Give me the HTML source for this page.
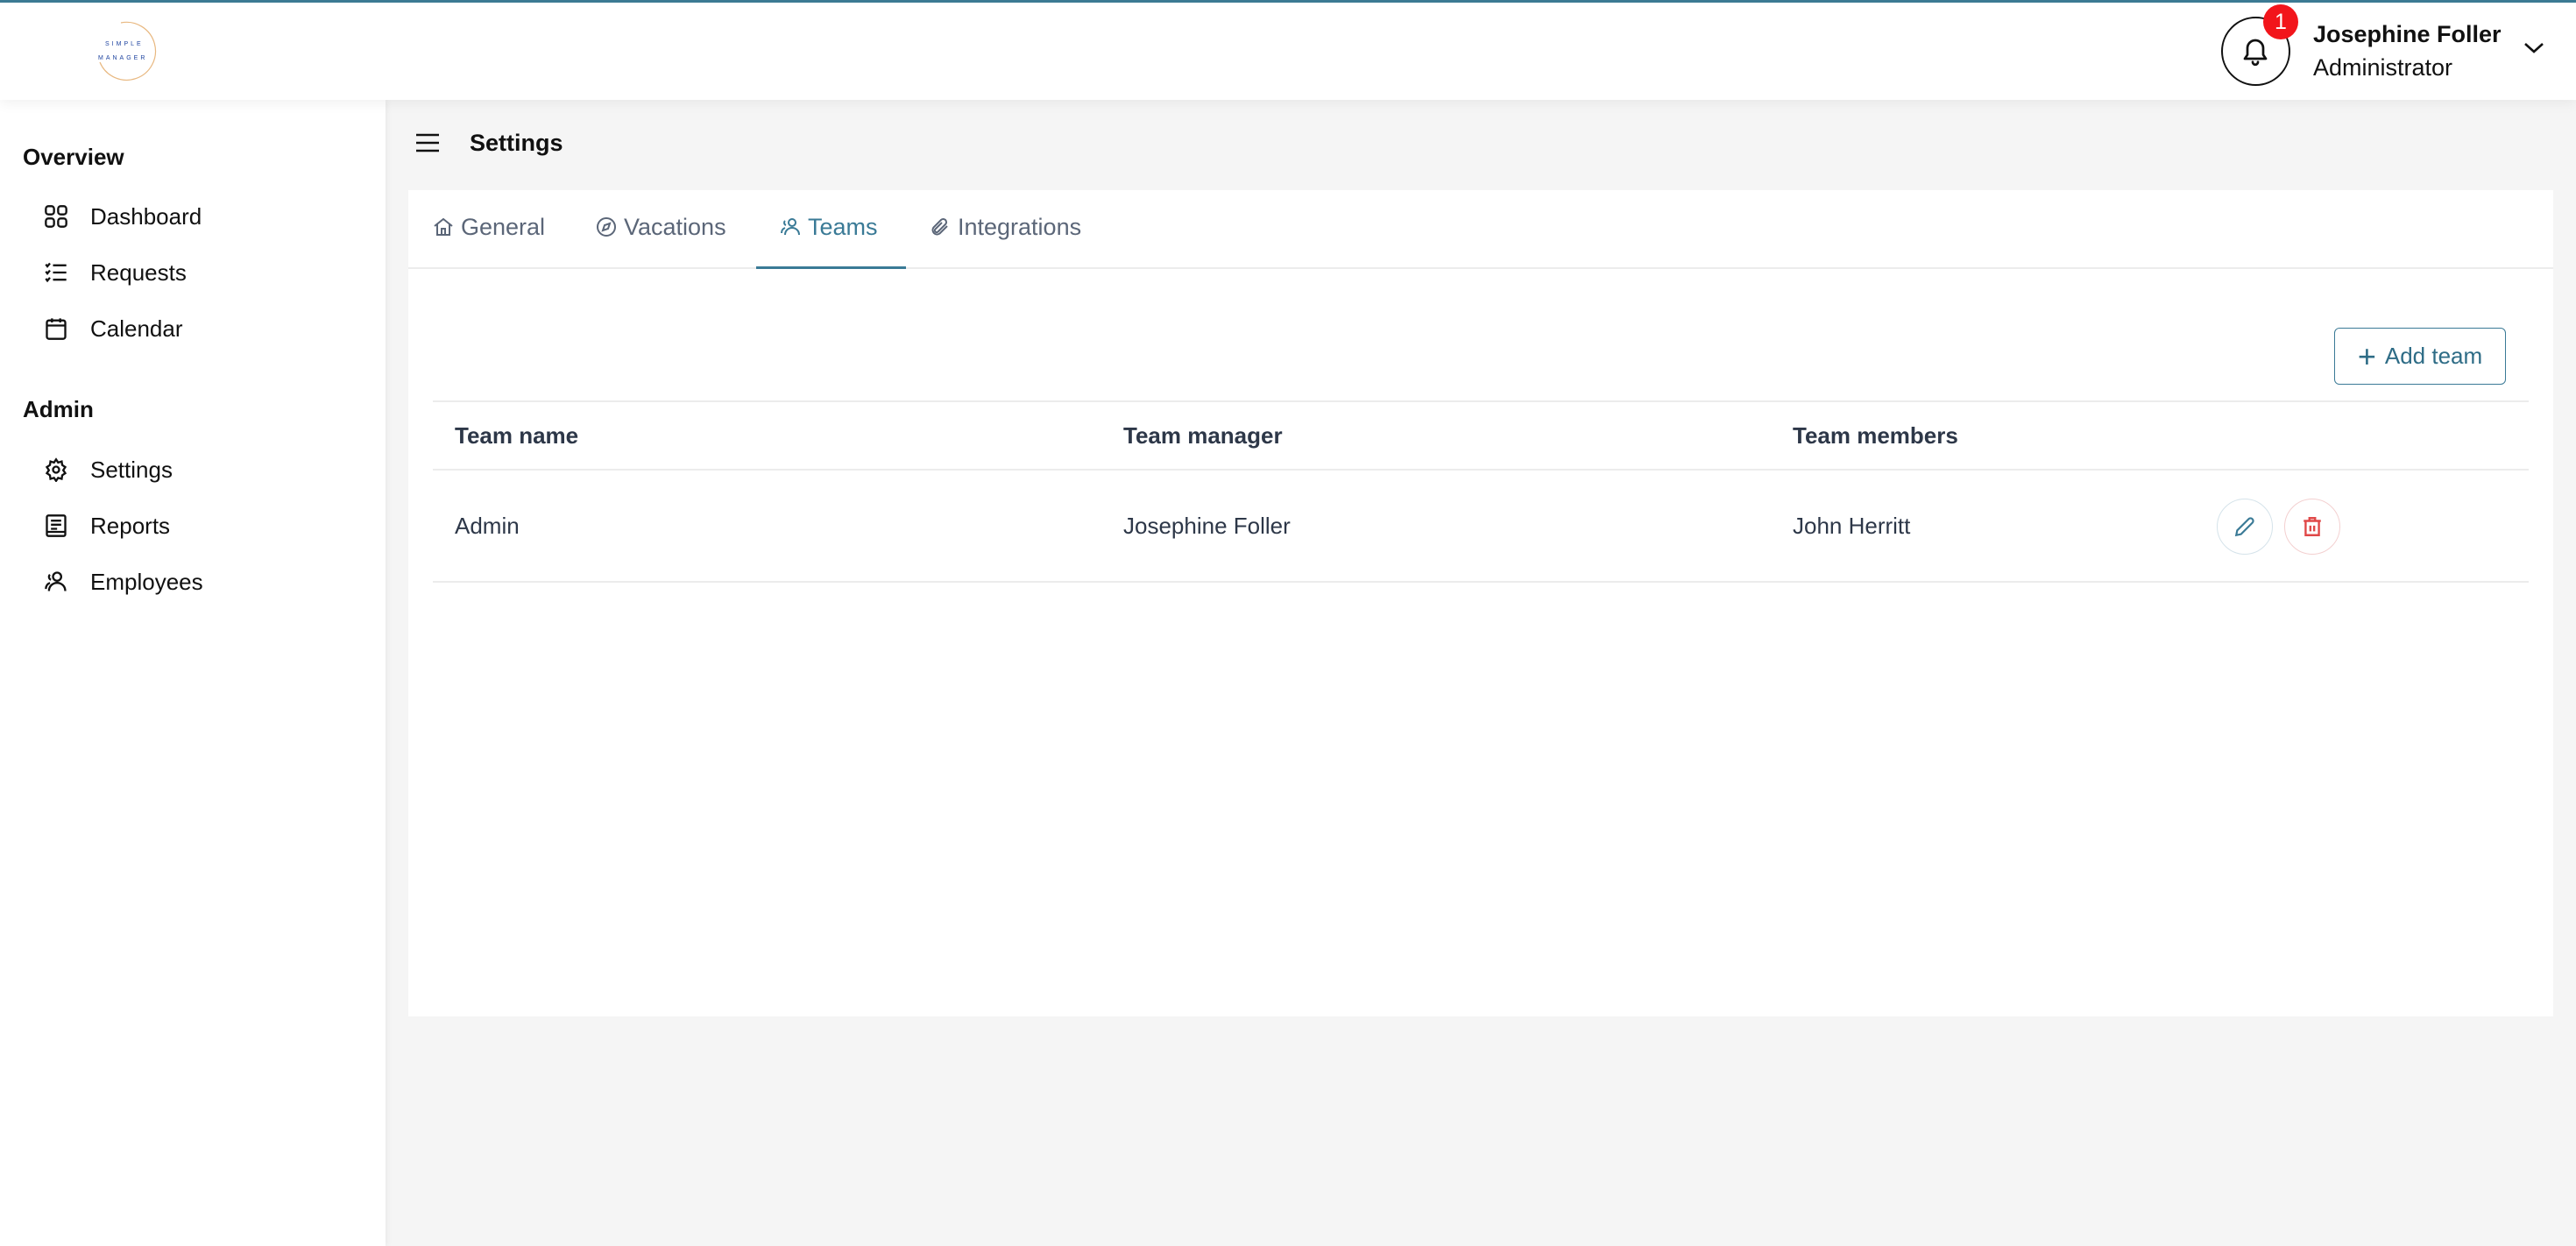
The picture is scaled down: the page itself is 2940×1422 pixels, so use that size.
<!DOCTYPE html>
<html><head><meta charset="utf-8"><style>
*{box-sizing:border-box;margin:0;padding:0}
body{width:2940px;height:1422px;position:relative;overflow:hidden;background:#f5f5f5;font-family:"Liberation Sans",sans-serif;color:#111}
.abs{position:absolute}
.hdr{left:0;top:0;width:2940px;height:114px;background:#fff;border-top:3px solid #3c7a93;box-shadow:0 4px 14px rgba(0,0,0,.06);z-index:2}
.side{left:0;top:114px;width:440px;height:1308px;background:#fff;box-shadow:2px 0 6px rgba(0,0,0,.05)}
.sec{left:26px;font-weight:bold;font-size:26px}
.item{left:50px;font-size:26px;display:flex;align-items:center;height:40px}
.item svg{width:28px;height:28px;margin-right:25px}
.card{left:466px;top:217px;width:2448px;height:943px;background:#fff}
.tab{top:226px;height:66px;display:flex;align-items:center;font-size:27px;color:#5b6678}
.tab svg{width:24px;height:24px;margin-right:8px}
.th{top:482px;font-size:26px;font-weight:bold;color:#2d3748}
.td{top:585px;font-size:26px;color:#2d3748}
.line{height:2px;background:#ececec;left:494px;width:2392px}
</style></head><body>
<div class="abs hdr">
 <svg class="abs" style="left:108px;top:18px" width="76" height="76" viewBox="0 0 76 76"><path d="M30 5 A33 33 0 1 1 6 50" fill="none" stroke="#e8b880" stroke-width="1.2"/></svg>
 <div class="abs" style="left:120px;top:44px;font-size:7px;letter-spacing:3px;color:#1f44a0">SIMPLE</div>
 <div class="abs" style="left:112px;top:60px;font-size:7px;letter-spacing:3px;color:#1f44a0">MANAGER</div>
 <div class="abs" style="left:2535px;top:16px;width:79px;height:79px;border:2px solid #111;border-radius:50%"></div>
 <svg class="abs" style="left:2556px;top:37px" width="36" height="36" viewBox="0 0 24 24" fill="none" stroke="#111" stroke-width="1.8" stroke-linecap="round" stroke-linejoin="round"><path d="M6 10a6 6 0 0 1 12 0v5l2 3H4l2-3z"/><path d="M10 20.5a2 2 0 0 0 4 0"/></svg>
 <div class="abs" style="left:2583px;top:2px;width:40px;height:40px;border-radius:50%;background:#f2151b;color:#fff;font-size:25px;text-align:center;line-height:40px">1</div>
 <div class="abs" style="left:2640px;top:21px;font-size:27px;font-weight:bold">Josephine Foller</div>
 <div class="abs" style="left:2640px;top:59px;font-size:27px">Administrator</div>
 <svg class="abs" style="left:2880px;top:44px" width="24" height="16" viewBox="0 0 24 16"><path d="M2 3l10 9 10-9" fill="none" stroke="#111" stroke-width="2.6"/></svg>
</div>
<div class="abs side"></div>
<div class="abs sec" style="top:164px">Overview</div>
<div class="abs item" style="top:227px"><svg viewBox="0 0 24 24" fill="none" stroke="#111" stroke-width="2"><rect x="2" y="2" width="8" height="8" rx="2.5"/><rect x="14" y="2" width="8" height="8" rx="2.5"/><rect x="2" y="14" width="8" height="8" rx="2.5"/><rect x="14" y="14" width="8" height="8" rx="2.5"/></svg>Dashboard</div>
<div class="abs item" style="top:291px"><svg viewBox="0 0 24 24" fill="none" stroke="#111" stroke-width="2"><path d="M9 5h13M9 12h13M9 19h13M2 4l1.5 2L6 3M2 11l1.5 2L6 10M2 18l1.5 2L6 17"/></svg>Requests</div>
<div class="abs item" style="top:355px"><svg viewBox="0 0 24 24" fill="none" stroke="#111" stroke-width="2"><rect x="3" y="4" width="18" height="18" rx="2"/><path d="M3 9h18M8 2v4M16 2v4"/></svg>Calendar</div>
<div class="abs sec" style="top:452px">Admin</div>
<div class="abs item" style="top:516px"><svg viewBox="0 0 24 24" fill="none" stroke="#111" stroke-width="2"><circle cx="12" cy="12" r="3"/><path d="M12 2l2 3 3.5-1 .5 3.5 3 2-2 3 2 3-3 2-.5 3.5-3.5-1-2 3-2-3-3.5 1-.5-3.5-3-2 2-3-2-3 3-2 .5-3.5 3.5 1z"/></svg>Settings</div>
<div class="abs item" style="top:580px"><svg viewBox="0 0 24 24" fill="none" stroke="#111" stroke-width="2"><rect x="3" y="2" width="18" height="20" rx="1.5"/><path d="M7 7h10M7 11h10M7 15h6M3 18h18"/></svg>Reports</div>
<div class="abs item" style="top:644px"><svg viewBox="0 0 24 24" fill="none" stroke="#111" stroke-width="2"><circle cx="13" cy="7" r="4"/><path d="M5 21c0-5 4-8 8-8s8 3 8 8M2 19c0-3 1.5-5 4-6M6 5a3 3 0 0 0 1 5"/></svg>Employees</div>
<svg class="abs" style="left:475px;top:152px" width="26" height="22" viewBox="0 0 26 22"><path d="M0 2h26M0 11h26M0 20h26" stroke="#111" stroke-width="2.6"/></svg>
<div class="abs" style="left:536px;top:148px;font-size:27px;font-weight:bold">Settings</div>
<div class="abs card"></div>
<div class="abs" style="left:466px;top:305px;width:2448px;height:2px;background:#ececec"></div>
<div class="abs" style="left:863px;top:304px;width:171px;height:3px;background:#3a7a96"></div>
<div class="abs tab" style="left:494px"><svg viewBox="0 0 24 24" fill="none" stroke="#5b6678" stroke-width="2"><path d="M2 11L12 3l10 8M5 9v12h14V9M10 21v-7h4v7"/></svg>General</div>
<div class="abs tab" style="left:680px"><svg viewBox="0 0 24 24" fill="none" stroke="#5b6678" stroke-width="2"><circle cx="12" cy="12" r="10"/><path d="M16 8l-2 6-6 2 2-6z"/></svg>Vacations</div>
<div class="abs tab" style="left:890px;color:#3a7a96"><svg viewBox="0 0 24 24" fill="none" stroke="#3a7a96" stroke-width="2"><circle cx="14" cy="7" r="4"/><path d="M6 21c0-5 4-8 8-8s8 3 8 8M2 19c0-3 1.5-5 4-6M6 5a3 3 0 0 0 1 5"/></svg>Teams</div>
<div class="abs tab" style="left:1061px"><svg viewBox="0 0 24 24" fill="none" stroke="#5b6678" stroke-width="2"><path d="M20 11l-8.5 8.5a5 5 0 0 1-7-7L13 4a3.5 3.5 0 0 1 5 5l-8.5 8.5a2 2 0 0 1-3-3L14 7"/></svg>Integrations</div>
<div class="abs" style="left:2664px;top:374px;width:196px;height:65px;border:1.5px solid #3a7a96;border-radius:6px;color:#2e6c86;font-size:26px;display:flex;align-items:center;justify-content:center"><span style="font-size:36px;font-weight:300;margin-right:10px;line-height:1">+</span>Add team</div>
<div class="abs line" style="top:457px"></div>
<div class="abs line" style="top:535px"></div>
<div class="abs line" style="top:663px"></div>
<div class="abs th" style="left:519px">Team name</div>
<div class="abs th" style="left:1282px">Team manager</div>
<div class="abs th" style="left:2046px">Team members</div>
<div class="abs td" style="left:519px">Admin</div>
<div class="abs td" style="left:1282px">Josephine Foller</div>
<div class="abs td" style="left:2046px">John Herritt</div>
<div class="abs" style="left:2530px;top:569px;width:64px;height:64px;border:1px solid #d5e3ea;border-radius:50%"></div>
<svg class="abs" style="left:2549px;top:588px" width="26" height="26" viewBox="0 0 24 24" fill="none" stroke="#3a7a96" stroke-width="2"><path d="M3 21l1-5L16 4a2.8 2.8 0 0 1 4 4L8 20z"/></svg>
<div class="abs" style="left:2607px;top:569px;width:64px;height:64px;border:1px solid #f3d0d0;border-radius:50%"></div>
<svg class="abs" style="left:2626px;top:588px" width="26" height="26" viewBox="0 0 24 24" fill="none" stroke="#e04848" stroke-width="2.2"><path d="M3 6h18M9 6V3h6v3M5 6v15h14V6M10 11v6M14 11v6"/></svg>
</body></html>
